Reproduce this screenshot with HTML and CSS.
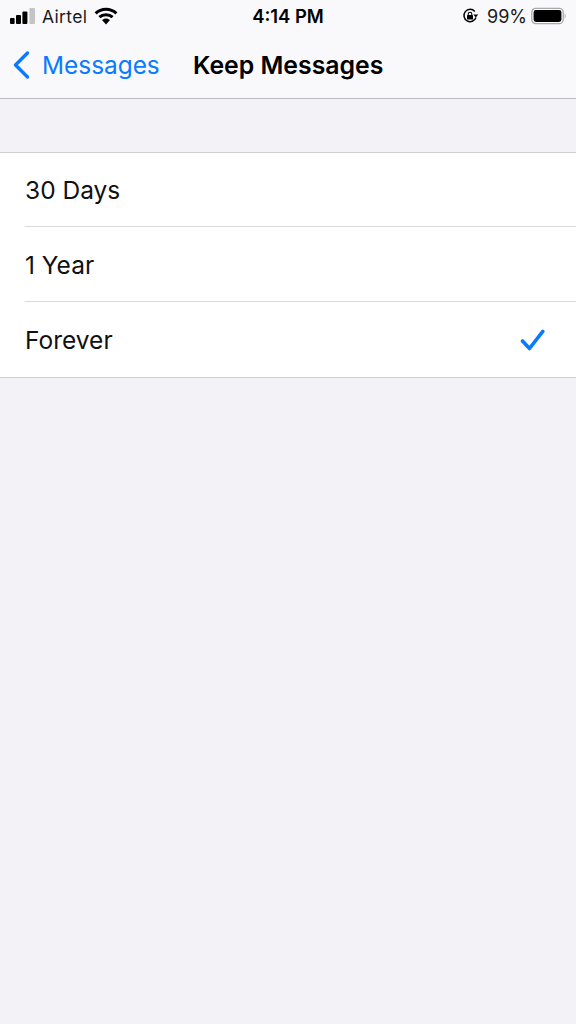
FILE: index.html
```html
<!DOCTYPE html>
<html lang="en">
<head>
<meta charset="utf-8">
<title>Keep Messages</title>
<link rel="stylesheet" href="styles.css">
</head>
<body>
<header class="top">
  <div class="status">
    <div class="status-left">
      <svg class="signal" width="26" height="18" viewBox="0 0 26 18">
        <rect x="0" y="11" width="4.6" height="6" rx="1" fill="#000"/>
        <rect x="6" y="8" width="5" height="9" rx="1" fill="#000"/>
        <rect x="12.4" y="4.5" width="5" height="12.5" rx="1" fill="#000"/>
        <rect x="19.4" y="1" width="5.6" height="16" rx="1" fill="#c4c4c6"/>
      </svg>
      <span class="carrier">Airtel</span>
      <svg class="wifi" width="24" height="18" viewBox="0 0 24 18">
        <path d="M1.6 6.4 C7.5 .9 16.5 .9 22.4 6.4" fill="none" stroke="#000" stroke-width="3"/>
        <path d="M5.4 10.2 C9 6.9 15 6.9 18.6 10.2" fill="none" stroke="#000" stroke-width="3"/>
        <path d="M8 13 C10.4 10.9 13.6 10.9 16 13 L12 17.4 Z" fill="#000"/>
      </svg>
    </div>
    <span class="clock">4:14 PM</span>
    <div class="status-right">
      <svg class="lock" width="17" height="16" viewBox="0 0 17 16">
        <path d="M14 9.6 A6.2 6.2 0 1 1 12.8 3.4" fill="none" stroke="#000" stroke-width="1.5"/>
        <path d="M11.4 6.4 L16.2 6.4 L13.8 9.6 Z" fill="#000"/>
        <rect x="5" y="7" width="6" height="4.6" rx=".7" fill="#000"/>
        <path d="M6.2 7.4 V6 a1.8 1.8 0 0 1 3.6 0 V7.4" fill="none" stroke="#000" stroke-width="1.1"/>
      </svg>
      <span class="battery-text">99%</span>
      <svg class="battery" width="36" height="18" viewBox="0 0 36 18">
        <rect x=".8" y="1.3" width="31.4" height="15.4" rx="4" fill="none" stroke="#a9a9ab" stroke-width="1.3"/>
        <rect x="2.6" y="3" width="27.8" height="12" rx="2.4" fill="#000"/>
        <path d="M33.6 6.4 C35 7 35 11 33.6 11.6 Z" fill="#a9a9ab"/>
      </svg>
    </div>
  </div>
  <nav class="nav">
    <div class="back">
      <svg class="chevron" width="20" height="30" viewBox="0 0 20 30">
        <path d="M16.5 3 L4.5 15 L16.5 27" fill="none" stroke="#0a7aff" stroke-width="3.4" stroke-linecap="round" stroke-linejoin="round"/>
      </svg>
      <span>Messages</span>
    </div>
    <h1 class="title">Keep Messages</h1>
  </nav>
</header>
<main>
  <ul class="list">
    <li class="row"><span>30 Days</span></li>
    <li class="row"><span>1 Year</span></li>
    <li class="row">
      <span>Forever</span>
      <svg class="check" width="26" height="24" viewBox="0 0 26 24">
        <path d="M2.5 13 L9.5 20.5 L22.8 3.3" fill="none" stroke="#0a7aff" stroke-width="3.6" stroke-linecap="round" stroke-linejoin="round"/>
      </svg>
    </li>
  </ul>
</main>
</body>
</html>
```

FILE: styles.css
```css
* { box-sizing: border-box; }
html, body { margin: 0; padding: 0; }
body {
  width: 576px;
  height: 1024px;
  overflow: hidden;
  background: #f2f2f7;
  font-family: Inter, "Liberation Sans", sans-serif;
  color: #000;
}
.top {
  height: 99px;
  background: #f9f9fb;
  border-bottom: 1px solid #bcbcc0;
}
.status {
  height: 32px;
  display: grid;
  grid-template-columns: 1fr auto 1fr;
  align-items: center;
  font-size: 17.5px;
}
.status-left {
  display: flex;
  align-items: center;
  padding-left: 10px;
}
.signal { margin-top: -1px; }
.carrier {
  margin-left: 6px;
  letter-spacing: .35px;
  color: #1a1a1a;
}
.wifi { margin-left: 7px; margin-top: -1px; }
.clock { font-weight: 600; font-size: 18.4px; }
.status-right {
  display: flex;
  align-items: center;
  justify-content: flex-end;
  padding-right: 9px;
}
.battery-text {
  margin-left: 8px;
  margin-right: 4px;
  font-size: 18px;
  color: #1a1a1a;
}
.nav {
  height: 66px;
  display: flex;
  align-items: center;
  padding-left: 11px;
}
.back {
  display: flex;
  align-items: center;
  color: #0a7aff;
  font-size: 24.4px;
  width: 182px;
}
.chevron { flex: none; }
.back span { margin-left: 11px; }
.title {
  margin: 0;
  font-size: 24.8px;
  font-weight: 600;
}
main { padding-top: 53px; }
.list {
  list-style: none;
  margin: 0;
  padding: 0;
  background: #fff;
  border-top: 1px solid #cfcfd3;
  border-bottom: 1px solid #cfcfd3;
}
.row {
  height: 75px;
  margin-left: 25px;
  padding-top: 1px;
  padding-right: 30px;
  display: flex;
  align-items: center;
  justify-content: space-between;
  font-size: 24.5px;
  color: #111;
  border-bottom: 1px solid #d9d9dd;
}
.row:first-child { height: 74px; }
.row:last-child { border-bottom: 0; }
```
